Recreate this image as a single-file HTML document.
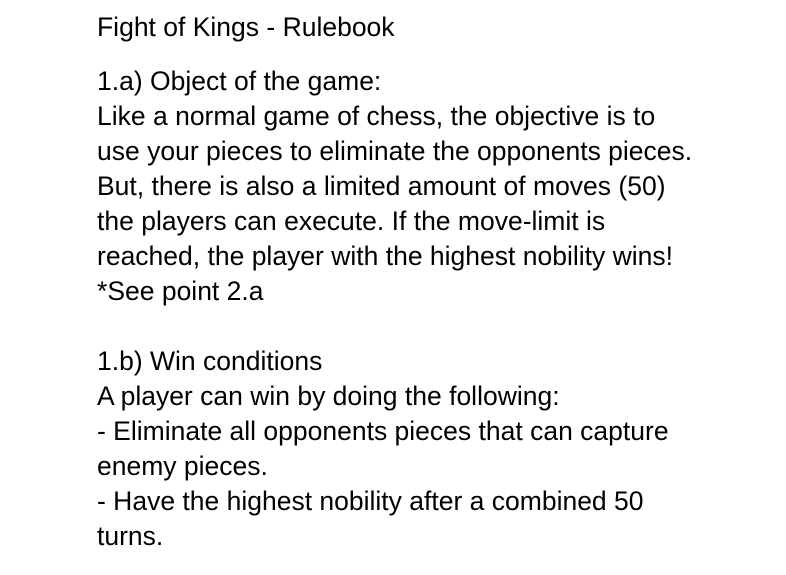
<!DOCTYPE html>
<html><head><meta charset="utf-8"><style>
html,body{margin:0;padding:0;background:#fff;width:786px;height:575px;overflow:hidden}
body{font-family:"Liberation Sans",Arial,sans-serif;color:#000}
.t{position:absolute;left:97px;top:11px;font-size:26.5px;line-height:32px;white-space:nowrap}
.b{position:absolute;left:97px;top:64px;font-size:26.5px;line-height:35px;white-space:pre}
</style></head><body>
<div class="t">Fight of Kings - Rulebook</div>
<div class="b">1.a) Object of the game:
Like a normal game of chess, the objective is to
use your pieces to eliminate the opponents pieces.
But, there is also a limited amount of moves (50)
the players can execute. If the move-limit is
reached, the player with the highest nobility wins!
*See point 2.a

1.b) Win conditions
A player can win by doing the following:
- Eliminate all opponents pieces that can capture
enemy pieces.
- Have the highest nobility after a combined 50
turns.</div>
</body></html>
